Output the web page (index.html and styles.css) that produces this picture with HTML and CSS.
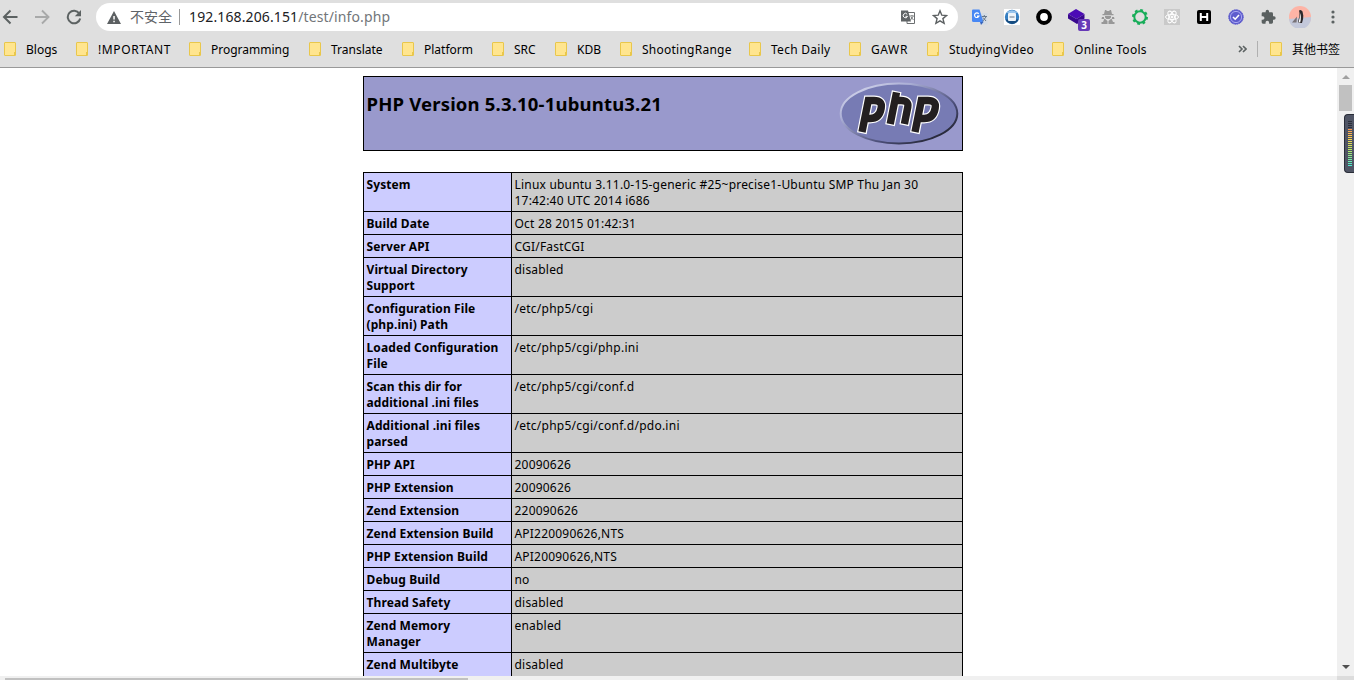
FILE: index.html
```html
<!DOCTYPE html>
<html lang="zh-CN">
<head>
<meta charset="utf-8">
<title>phpinfo()</title>
<link rel="stylesheet" href="styles.css">
</head>
<body>
<header class="chrome">
  <div class="toolbar">
    <div class="nav">
      <svg width="16" height="16" viewBox="0 0 16 16" fill="none" stroke="#5c6262" stroke-width="2"><path d="M15.500 8H2M8.500 1.500 2 8l6.500 6.500"/></svg>
      <svg width="16" height="16" viewBox="0 0 16 16" fill="none" stroke="#a8a9a9" stroke-width="1.900"><path d="M1 8h13M8 1.500 14.500 8 8 14.500"/></svg>
      <svg width="16" height="16" viewBox="0 0 16 16"><path d="M13.300 4.500A6.300 6.300 0 1 0 14.200 9.500" fill="none" stroke="#5c6262" stroke-width="2"/><path d="M15 1v6.200H8.800z" fill="#5c6262"/></svg>
    </div>
    <div class="omnibox">
      <svg width="14" height="13" viewBox="0 0 14 13"><path d="M7 0 14 13H0z" fill="#5c6062"/><path d="M6.300 5h1.500v3.600H6.300zM6.300 9.800h1.500v1.500H6.300z" fill="#fff"/></svg>
      <span class="warn">不安全</span><i class="rule"></i>
      <span class="url"><b>192.168.206.151</b>/test/info.php</span>
      <svg class="tr" width="14" height="14" viewBox="0 0 14 14"><path d="M6 2.500h7.500v11H6z" fill="#fff" stroke="#6b6e70"/><path d="M0 .500h7l3 11H0z" fill="#606466"/><path d="M6.200 4.300A2.200 2.200 0 1 0 6.500 6.300H4.500" fill="none" stroke="#fff" stroke-width="1"/><path d="M8.500 6H13M11 5v1M12 6.500 9.500 10M10 7l2.500 3" stroke="#606466" fill="none" stroke-width=".8"/></svg>
      <svg width="16" height="16" viewBox="0 0 16 16"><path d="m8 1.800 1.800 4.400 4.700.4-3.600 3 1.200 4.700L8 11.800l-4.100 2.500 1.200-4.700-3.600-3 4.700-.4z" fill="none" stroke="#5c6062" stroke-width="1.400"/></svg>
    </div>
    <div class="exts">
      <svg width="16" height="16" viewBox="0 0 16 16"><path d="M6 4h9.500v11.500H9z" fill="#d5dce3"/><path d="M0 1.500Q0 .500 1 .500h6.500L11.500 13H1.500Q0 13 0 11.500z" fill="#4888f4"/><path d="m8 13 3.500 0L9 16z" fill="#3563bd"/><path d="M6.700 4.800a2.300 2.300 0 1 0 .3 2.300H5" fill="none" stroke="#fff" stroke-width="1.200"/><path d="M9.800 7.500H15M12.300 6v1.500M14 8l-3.500 4.500M11 8.500l3 3.500" stroke="#68788a" fill="none"/></svg>
      <svg width="16" height="16" viewBox="0 0 16 16"><path d="M0 0h16v16H0z" fill="#fff"/><circle cx="8" cy="8" r="7.200" fill="#367fc2"/><path d="M1.500 10.500a7 7 0 0 0 13 0z" fill="#164c80"/><path d="M2.500 4a7 7 0 0 1 11 0z" fill="#99c5ed"/><rect x="4" y="4" width="8" height="8" rx="1" fill="#eef4fa"/><path d="M5.500 8h5" stroke="#678"/></svg>
      <svg width="16" height="16" viewBox="0 0 16 16"><circle cx="8" cy="8" r="5.900" fill="#fff" stroke="#000" stroke-width="4"/></svg>
      <span class="badged"><svg width="17" height="16" viewBox="0 0 17 16"><path d="m8 0 8.500 5-8 5L0 5z" fill="#4b0ab5"/><path d="m0 5 8.500 5L16.500 5v4.500L9 15 0 9.500z" fill="#39088e"/></svg><em>3</em></span>
      <svg width="16" height="16" viewBox="0 0 16 16" fill="#989898"><path d="M5 1h1l1 1h2l1-1h1l1 4h1.500v1.200h-11V5H4zM5 7h6v1.500L9.500 10h-3L5 8.500zM4.500 9.500 7.500 12v3H1.500v-2H3zM11.500 9.500 8.500 12v3h6v-2H13zM2 8h2v2H1.500zM12 8h2l.5 2H12z"/></svg>
      <svg width="16" height="16" viewBox="0 0 16 16"><circle cx="8" cy="8" r="7" fill="none" stroke="#17ad59" stroke-width="2" stroke-dasharray="2.750 2.748"/><circle cx="8" cy="8" r="5.700" fill="none" stroke="#17ad59" stroke-width="2"/></svg>
      <svg width="16" height="16" viewBox="0 0 16 16" fill="none" stroke="#fff"><path d="M0 0h16v16H0z" fill="#c9c9c9" stroke="none"/><ellipse cx="8" cy="8" rx="6.500" ry="2.600"/><ellipse cx="8" cy="8" rx="6.500" ry="2.600" transform="rotate(60 8 8)"/><ellipse cx="8" cy="8" rx="6.500" ry="2.600" transform="rotate(120 8 8)"/><circle cx="8" cy="8" r="1" fill="#fff"/></svg>
      <svg width="16" height="16" viewBox="0 0 16 16"><rect x="1" y="1" width="14" height="14" rx="2" fill="#000"/><path d="M4.800 4v8M11.200 4v8M5 8h6" stroke="#fff" stroke-width="2"/></svg>
      <svg width="16" height="16" viewBox="0 0 16 16"><circle cx="8" cy="8" r="7.300" fill="#5e5ccd" stroke="#5e5ccd" stroke-dasharray="1.500 .8"/><circle cx="8" cy="8" r="5.600" fill="none" stroke="#bbbafa" stroke-width=".8"/><path d="m5 8 2.200 2.200L11 6" stroke="#fff" stroke-width="1.600" fill="none"/></svg>
      <svg width="16" height="16" viewBox="0 0 24 24"><path d="M21 11h-1.500V7a2 2 0 0 0-2-2h-4V3.500a2.500 2.500 0 0 0-5 0V5h-4a2 2 0 0 0-2 2v3.800H4a2.700 2.700 0 0 1 0 5.400H2.500V20a2 2 0 0 0 2 2h3.800v-1.500a2.700 2.700 0 0 1 5.400 0V22h3.800a2 2 0 0 0 2-2v-4H21a2.500 2.500 0 0 0 0-5z" fill="#5a6060"/></svg>
    </div>
    <svg class="avatar" width="22" height="22" viewBox="0 0 22 22"><circle cx="11" cy="11" r="11" fill="#fdb4a6"/><path d="M0 13 22 11A11 11 0 0 1 0 13z" fill="#c3c8da"/><path d="M10 4.500q2-1.500 3.500 1l.8 4q.2 4-1.300 7.500h-3L9 16q1.500-5 1.500-9z" fill="#2e292c"/><path d="M11 7q1.700 4 .2 9.500h-1.700q1.500-4 1.500-9.500z" fill="#fff"/><path d="m3 16.500 5-6-.5 6z" fill="#777176"/></svg>
    <svg class="more" width="4" height="14" viewBox="0 0 4 14" fill="#5c6262"><circle cx="2" cy="2" r="1.600"/><circle cx="2" cy="7" r="1.600"/><circle cx="2" cy="12" r="1.600"/></svg>
  </div>
  <nav class="bookmarks">
    <a class="w72"><i class="folder"></i>Blogs</a><a class="w113"><i class="folder"></i><span class="wide">!MPORTANT</span></a><a class="w120"><i class="folder"></i>Programming</a><a class="w93"><i class="folder"></i>Translate</a><a class="w90"><i class="folder"></i>Platform</a><a class="w63"><i class="folder"></i>SRC</a><a class="w65"><i class="folder"></i>KDB</a><a class="w129"><i class="folder"></i>ShootingRange</a><a class="w100"><i class="folder"></i><span class="mid">Tech Daily</span></a><a class="w78"><i class="folder"></i><span class="wide">GAWR</span></a><a class="w125"><i class="folder"></i><span class="mid">StudyingVideo</span></a><a class="w186"><i class="folder"></i><span class="mid">Online Tools</span></a>
    <svg width="9" height="8" viewBox="0 0 9 8" fill="none" stroke="#5c6262" stroke-width="1.600"><path d="m1 1 3 3-3 3M5 1l3 3-3 3"/></svg>
    <i class="divider"></i>
    <a class="other"><i class="folder"></i>其他书签</a>
  </nav>
</header>
<div class="viewport">
  <main class="page">
    <section class="banner">
      <h1>PHP Version 5.3.10-1ubuntu3.21</h1>
      <svg width="120" height="67" viewBox="0 0 120 67">
        <defs><linearGradient id="rim" x1="0" y1="0" x2="1" y2="1"><stop offset="0" stop-color="#e4e5f4"/><stop offset=".3" stop-color="#aaaed5"/><stop offset=".65" stop-color="#4b4e78"/><stop offset="1" stop-color="#111"/></linearGradient></defs>
        <ellipse cx="60" cy="33.500" rx="58.300" ry="30" fill="#777bb4" stroke="url(#rim)" stroke-width="2"/>
        <g fill="none">
          <g stroke="#fff" stroke-width="9.800"><path d="M22.800 53.200 29.300 20.500H35q8.500 0 7.200 7.500-1.700 10.500-11.200 10.500H27M51 45.200l6.700-34M57 20.500h5q8 0 6.800 6.500l-3.600 18.200M75.800 53.200 82.300 20.500H89q8.500 0 7.200 7.500-1.700 10.500-11.200 10.500H80"/></g>
          <g stroke="#231f20" stroke-width="7.400"><path d="M23 52 29.300 20.500H35q8.500 0 7.200 7.500-1.700 10.500-11.200 10.500H27M51.200 44l6.300-31.600M57 20.500h5q8 0 6.800 6.500l-3.400 17M76 52 82.300 20.500H89q8.500 0 7.200 7.500-1.700 10.500-11.200 10.500H80"/></g>
        </g>
      </svg>
    </section>
    <table class="info">
      <tr><th>System</th><td>Linux ubuntu 3.11.0-15-generic #25~precise1-Ubuntu SMP Thu Jan 30<br>17:42:40 UTC 2014 i686</td></tr>
      <tr><th>Build Date</th><td>Oct 28 2015 01:42:31</td></tr>
      <tr><th>Server API</th><td>CGI/FastCGI</td></tr>
      <tr><th>Virtual Directory<br>Support</th><td>disabled</td></tr>
      <tr><th>Configuration File<br>(php.ini) Path</th><td class="path">/etc/php5/cgi</td></tr>
      <tr><th>Loaded Configuration<br>File</th><td class="path">/etc/php5/cgi/php.ini</td></tr>
      <tr><th>Scan this dir for<br>additional .ini files</th><td class="path">/etc/php5/cgi/conf.d</td></tr>
      <tr><th>Additional .ini files<br>parsed</th><td class="path">/etc/php5/cgi/conf.d/pdo.ini</td></tr>
      <tr><th>PHP API</th><td>20090626</td></tr>
      <tr><th>PHP Extension</th><td>20090626</td></tr>
      <tr><th>Zend Extension</th><td>220090626</td></tr>
      <tr><th>Zend Extension Build</th><td>API220090626,NTS</td></tr>
      <tr><th>PHP Extension Build</th><td>API20090626,NTS</td></tr>
      <tr><th>Debug Build</th><td>no</td></tr>
      <tr><th>Thread Safety</th><td>disabled</td></tr>
      <tr><th>Zend Memory<br>Manager</th><td>enabled</td></tr>
      <tr class="last"><th>Zend Multibyte</th><td>disabled</td></tr>
    </table>
  </main>
  <div class="vbar"><i class="up"></i><i class="thumb"></i><i class="down"></i></div>
</div>
<footer class="hbar"><i class="hthumb"></i><i class="corner"></i></footer>
<div class="meter"><i></i></div>
</body>
</html>
```
FILE: styles.css
```css
* { box-sizing: border-box; }
body { margin: 0; width: 1354px; height: 680px; overflow: hidden; background: #fff; color: #000; font-family: "Noto Sans", "Noto Sans CJK SC", sans-serif; display: flex; flex-direction: column; }
svg { display: block; flex: none; }
.chrome { height: 68px; flex: none; background: #dfdfdf; border-bottom: 1px solid #999; }
.toolbar { height: 34px; display: flex; align-items: center; padding-left: 2px; }
.nav { display: flex; gap: 16px; width: 94px; flex: none; }
.omnibox { width: 862px; height: 28px; border-radius: 14px; background: #fff; display: flex; align-items: center; padding: 0 10px 2px 11px; flex: none; }
.omnibox svg { margin-top: 2px; }
.warn { font-size: 14px; color: #5f6368; margin-left: 9px; width: 42px; white-space: nowrap; }
.rule { width: 1px; height: 16px; background: #999; margin: 2px 9px 0 7px; }
.url { font-size: 14px; color: #72767a; white-space: nowrap; letter-spacing: 0.120px; }
.url b { font-weight: normal; color: #202124; }
.omnibox .tr { margin: 2px 17px 0 auto; }
.exts { display: flex; gap: 16px; margin-left: 14px; }
.exts > * { flex: none; }
.badged { position: relative; width: 16px; }
.badged em { position: absolute; left: 10px; top: 10px; width: 12px; height: 12px; border-radius: 2px; background: #673ab7; color: #fff; font: bold 10px/12px "Open Sans", sans-serif; text-align: center; }
.avatar { margin-left: 13px; }
.more { margin-left: 20px; }
.bookmarks { height: 30px; display: flex; align-items: center; padding-left: 4px; font-size: 12px; white-space: nowrap; }
.bookmarks a { display: flex; align-items: center; gap: 10px; flex: none; }
.folder { width: 12px; height: 14px; flex: none; background: linear-gradient(#e9c74b, #e9c74b) 9px 9px / 3px 5px no-repeat, #ffe58f; border: 1px solid #e9c74b; border-radius: 1px; }
.wide { letter-spacing: 0.600px; }
.mid { letter-spacing: 0.280px; }
.w72 { width: 72px; } .w113 { width: 113px; } .w120 { width: 120px; } .w93 { width: 93px; }
.w90 { width: 90px; } .w63 { width: 63px; } .w65 { width: 65px; } .w129 { width: 129px; letter-spacing: 0.250px; }
.w100 { width: 100px; } .w78 { width: 78px; } .w125 { width: 125px; } .w186 { width: 186px; }
.divider { width: 1px; height: 16px; background: #b0b0b0; margin: 0 12px 0 10px; }
.viewport { height: 608px; display: flex; overflow: hidden; flex: none; }
.page { width: 1337px; padding: 8px 0 0 363px; flex: none; }
.banner { width: 600px; height: 75px; border: 1px solid #000; background: #9999cc; display: flex; justify-content: space-between; padding: 3px 3px 0 2.500px; }
h1 { margin: 10px 0 0; font-size: 18.500px; letter-spacing: 0.180px; line-height: 28px; font-weight: bold; white-space: nowrap; }
.info { width: 600px; margin-top: 21px; border-collapse: collapse; table-layout: fixed; font-size: 12px; line-height: 16px; white-space: nowrap; }
.info th, .info td { border: 1px solid #000; vertical-align: top; text-align: left; padding: 4px 2.500px 2px; }
.info th { width: 148px; background: #ccccff; font-weight: bold; letter-spacing: 0.100px; }
.info td { background: #cccccc; letter-spacing: 0.200px; }
.info .path { letter-spacing: 0.250px; }
.info .last { height: 39px; }
.vbar { width: 17px; background: #f0f0f0; display: flex; flex-direction: column; align-items: center; padding: 7px 0 7px; }
.up { border: solid transparent; border-width: 0 4px 4px; border-bottom-color: #a0a0a0; }
.thumb { width: 13px; height: 26px; margin-top: 6px; background: #c1c1c1; }
.down { margin-top: auto; border: solid transparent; border-width: 4px 4px 0; border-top-color: #505050; }
.hbar { height: 4px; display: flex; background: #f0f0f0; padding: 2px 0 0 5px; }
.hthumb { width: 463px; height: 2px; background: #c1c1c1; }
.corner { width: 17px; height: 4px; margin: -2px 0 0 auto; background: #dcdcdc; }
.meter { position: absolute; left: 1344px; top: 114px; width: 10px; height: 59px; background: #505565; border: 1px solid #292d38; border-right: 0; border-radius: 4px 0 0 4px; padding: 6px 0 0 3px; }
.meter i { display: block; width: 4px; height: 46px; background: repeating-linear-gradient(transparent 0 1px, #505565 1px 2px), linear-gradient(#2c303b 0 8px, #ff984f 8px, #ffd34d 17px, #b8ed62 29px, #42edda 46px); }
```
